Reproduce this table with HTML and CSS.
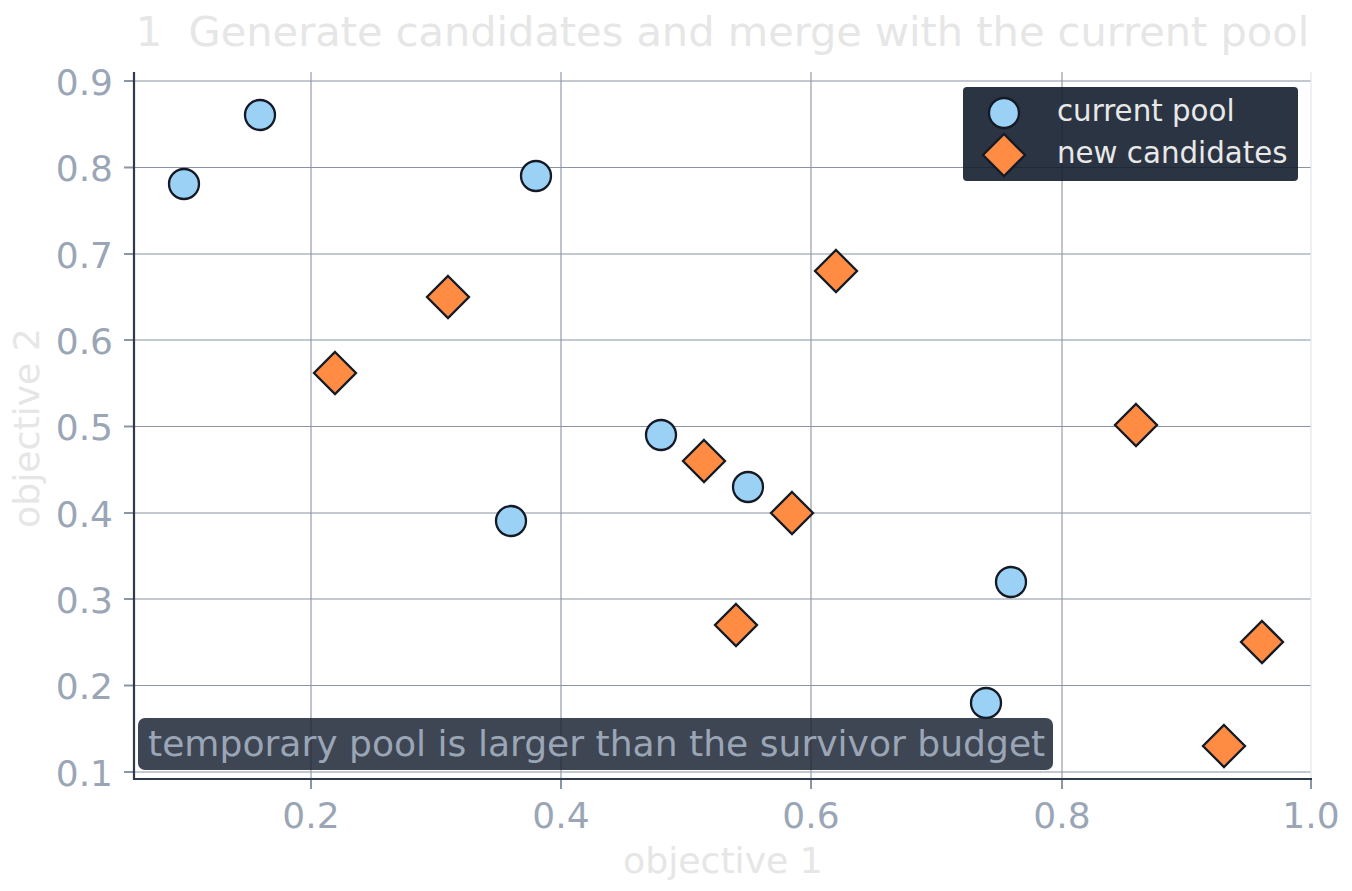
FILE: index.html
```html
<!DOCTYPE html>
<html lang="en">
<head>
<meta charset="utf-8">
<title>Generate candidates and merge with the current pool</title>
<link rel="stylesheet" href="styles.css">
</head>
<body>
<div class="figure">
<svg class="chart" width="1352" height="891" viewBox="0 0 1352 891" xmlns="http://www.w3.org/2000/svg">
  <text class="title" x="722.5" y="46" text-anchor="middle">1  Generate candidates and merge with the current pool</text>

  <!-- grid -->
  <g class="grid">
    <line x1="311" y1="72" x2="311" y2="779"/>
    <line x1="561" y1="72" x2="561" y2="779"/>
    <line x1="811" y1="72" x2="811" y2="779"/>
    <line x1="1062" y1="72" x2="1062" y2="779"/>
    <line x1="134" y1="81" x2="1311" y2="81"/>
    <line x1="134" y1="167.5" x2="1311" y2="167.5"/>
    <line x1="134" y1="254" x2="1311" y2="254"/>
    <line x1="134" y1="340" x2="1311" y2="340"/>
    <line x1="134" y1="426.5" x2="1311" y2="426.5"/>
    <line x1="134" y1="513" x2="1311" y2="513"/>
    <line x1="134" y1="599" x2="1311" y2="599"/>
    <line x1="134" y1="685.5" x2="1311" y2="685.5"/>
    <line x1="134" y1="772" x2="1311" y2="772"/>
  </g>

  <line class="spine-light" x1="1311" y1="72" x2="1311" y2="779"/>

  <!-- ticks -->
  <g class="tick">
    <line x1="124" y1="81" x2="134" y2="81"/>
    <line x1="124" y1="167.5" x2="134" y2="167.5"/>
    <line x1="124" y1="254" x2="134" y2="254"/>
    <line x1="124" y1="340" x2="134" y2="340"/>
    <line x1="124" y1="426.5" x2="134" y2="426.5"/>
    <line x1="124" y1="513" x2="134" y2="513"/>
    <line x1="124" y1="599" x2="134" y2="599"/>
    <line x1="124" y1="685.5" x2="134" y2="685.5"/>
    <line x1="124" y1="772" x2="134" y2="772"/>
    <line x1="311" y1="779" x2="311" y2="789"/>
    <line x1="561" y1="779" x2="561" y2="789"/>
    <line x1="811" y1="779" x2="811" y2="789"/>
    <line x1="1062" y1="779" x2="1062" y2="789"/>
    <line x1="1311" y1="779" x2="1311" y2="789"/>
  </g>

  <g class="ticklabel-y" text-anchor="end">
    <text x="113" y="94.5">0.9</text>
    <text x="113" y="181">0.8</text>
    <text x="113" y="267.5">0.7</text>
    <text x="113" y="353.5">0.6</text>
    <text x="113" y="440">0.5</text>
    <text x="113" y="526.5">0.4</text>
    <text x="113" y="612.5">0.3</text>
    <text x="113" y="699">0.2</text>
    <text x="113" y="785.5">0.1</text>
  </g>
  <g class="ticklabel-x" text-anchor="middle">
    <text x="311" y="828">0.2</text>
    <text x="561" y="828">0.4</text>
    <text x="811" y="828">0.6</text>
    <text x="1062" y="828">0.8</text>
    <text x="1311" y="828">1.0</text>
  </g>

  <text class="axislabel" x="723" y="873" text-anchor="middle">objective 1</text>
  <text class="axislabel" x="0" y="0" text-anchor="middle" transform="translate(39 428) rotate(-90)">objective 2</text>

  <!-- spines -->
  <line class="spine" x1="134" y1="72" x2="134" y2="780"/>
  <line class="spine" x1="133" y1="779" x2="1312" y2="779"/>

  <!-- current pool -->
  <g class="pool">
    <circle cx="184" cy="184" r="15"/>
    <circle cx="260" cy="115" r="15"/>
    <circle cx="536" cy="176" r="15"/>
    <circle cx="511" cy="521" r="15"/>
    <circle cx="661" cy="435" r="15"/>
    <circle cx="748" cy="487" r="15"/>
    <circle cx="1011" cy="582" r="15"/>
    <circle cx="986" cy="703" r="15"/>
  </g>

  <!-- new candidates -->
  <g class="cand">
    <polygon points="335,352 356,373 335,394 314,373"/>
    <polygon points="448,276 469,297 448,318 427,297"/>
    <polygon points="836,250 857,271 836,292 815,271"/>
    <polygon points="704,440 725,461 704,482 683,461"/>
    <polygon points="792,492 813,513 792,534 771,513"/>
    <polygon points="736,604 757,625 736,646 715,625"/>
    <polygon points="1136,404 1157,425 1136,446 1115,425"/>
    <polygon points="1262,621 1283,642 1262,663 1241,642"/>
    <polygon points="1224,725 1245,746 1224,767 1203,746"/>
  </g>

  <!-- legend -->
  <rect class="legend-box" x="963" y="87" width="335" height="94" rx="4"/>
  <circle class="pool-m" cx="1004" cy="113" r="15"/>
  <polygon class="cand-m" points="1004,134 1025,155 1004,176 983,155"/>
  <text class="legend-text" x="1057" y="121">current pool</text>
  <text class="legend-text" x="1057" y="163">new candidates</text>

  <!-- annotation -->
  <rect class="note-box" x="138" y="718" width="915" height="52" rx="7"/>
  <text class="note-text" x="148" y="756">temporary pool is larger than the survivor budget</text>
</svg>
</div>
</body>
</html>
```

FILE: styles.css
```css
html, body {
  margin: 0;
  padding: 0;
  background: #ffffff;
}
.figure {
  width: 1352px;
  height: 891px;
  overflow: hidden;
}
.chart {
  display: block;
  font-family: "DejaVu Sans", "Liberation Sans", sans-serif;
}
.title {
  font-size: 41.5px;
  fill: #e6e6e6;
  white-space: pre;
}
.grid line {
  stroke: #8a93a3;
  stroke-width: 1.1;
}
.spine-light {
  stroke: #e2e5ea;
  stroke-width: 1.2;
}
.tick line {
  stroke: #8a96a8;
  stroke-width: 2;
}
.ticklabel-y text,
.ticklabel-x text {
  font-size: 36px;
  fill: #9aa6b6;
}
.axislabel {
  font-size: 36.2px;
  fill: #e6e6e6;
}
.spine {
  stroke: #2f3a4a;
  stroke-width: 2.2;
}
.pool circle,
.pool-m {
  fill: #9cd1f6;
  stroke: #141b26;
  stroke-width: 2.3;
}
.cand polygon,
.cand-m {
  fill: #ff8c42;
  stroke: #141b26;
  stroke-width: 2.3;
  stroke-linejoin: miter;
}
.legend-box {
  fill: #141e2f;
  fill-opacity: 0.9;
}
.legend-text {
  font-size: 29.3px;
  fill: #e8e8e8;
}
.note-box {
  fill: #1c2435;
  fill-opacity: 0.85;
}
.note-text {
  font-size: 36.1px;
  fill: #9aa6b6;
}
```
